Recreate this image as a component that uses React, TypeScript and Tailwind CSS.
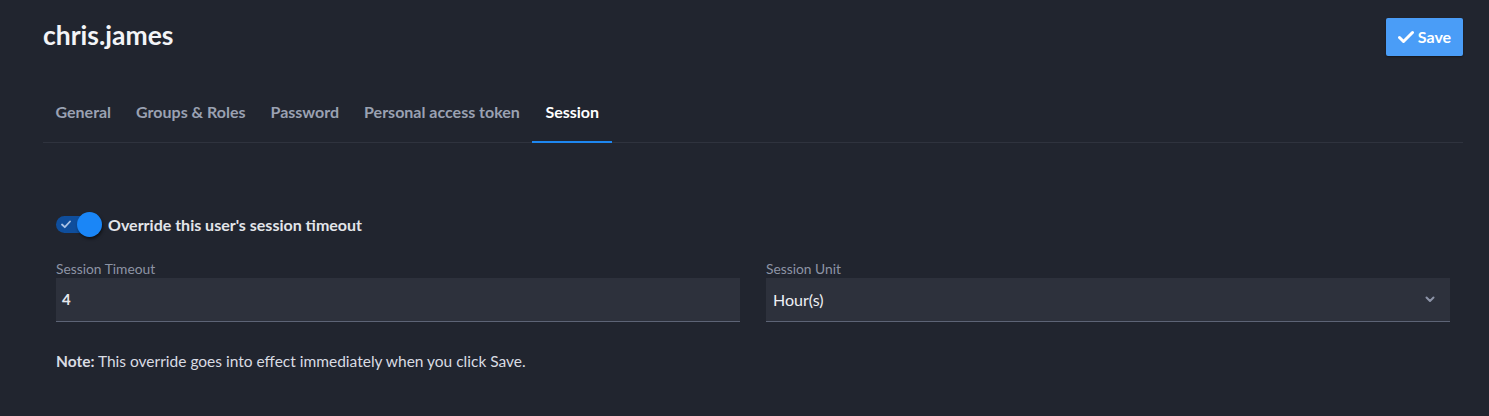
import React from "react";

const tabs = ["General", "Groups & Roles", "Password", "Personal access token", "Session"];

export default function App() {
  return (
    <div className="min-h-[416px] w-full bg-[#21252f] pl-[43px] pr-[26px] pt-[18px] text-[#e6e8ee]" style={{ fontFamily: "Lato, 'Noto Sans', sans-serif" }}>
      <div className="flex items-center justify-between h-[38px]">
        <h1 className="-mt-[4px] text-[26.5px] font-bold text-[#f3f4f7] leading-none">chris.james</h1>
        <button className="flex h-[38px] w-[77px] items-center justify-center gap-[4px] rounded-[2px] bg-[#4a9df7] text-[16px] font-bold text-white shadow-[0_1px_2px_rgba(0,0,0,0.4)]">
          <svg width="16" height="14" viewBox="0 0 16 14" fill="none">
            <path d="M1.5 7.5 L5.5 11.5 L14.5 2.5" stroke="white" strokeWidth="3" strokeLinecap="round" strokeLinejoin="round" />
          </svg>
          Save
        </button>
      </div>

      <div className="mt-[40px] flex border-b border-[#2f333e]">
        {tabs.map((t) => {
          const active = t === "Session";
          return (
            <div
              key={t}
              className={
                active
                  ? "-mb-px border-b-2 border-[#1e87f0] px-[13px] pb-[17px] pt-[4px] text-[16px] leading-[24px] font-bold text-white"
                  : "px-[12.5px] pb-[18px] pt-[4px] text-[16px] leading-[24px] font-bold text-[#9aa1b2]"
              }
            >
              {t}
            </div>
          );
        })}
      </div>

      <div className="px-[13px] pt-[69px]">
        <div className="flex items-center gap-[6px]">
          <div className="relative h-[25px] w-[46px]">
            <div className="absolute left-0 top-[4px] h-[17px] w-[36px] rounded-full bg-[#0f4e9c]">
              <svg className="absolute left-[5px] top-[4px]" width="10" height="9" viewBox="0 0 10 9" fill="none">
                <path d="M1 4.5 L3.8 7.2 L9 1.5" stroke="#a9c3e6" strokeWidth="1.8" strokeLinecap="round" strokeLinejoin="round" />
              </svg>
            </div>
            <div className="absolute right-0 top-0 h-[25px] w-[25px] rounded-full bg-[#1a86f7] shadow-[1px_2px_3px_rgba(0,0,0,0.5)]" />
          </div>
          <span className="text-[16px] font-bold text-[#e3e5ea]">Override this user's session timeout</span>
        </div>

        <div className="mt-[24px] grid grid-cols-2 gap-[26px]">
          <div>
            <div className="text-[13.8px] text-[#8d94a5] leading-[16px]">Session Timeout</div>
            <div className="mt-[1px] flex h-[44px] items-center border-b border-[#5d6476] bg-[#2d313c] px-[6px] text-[15px] font-bold text-[#e6e8ee]">4</div>
          </div>
          <div>
            <div className="text-[13.8px] text-[#8d94a5] leading-[16px]">Session Unit</div>
            <div className="mt-[1px] flex h-[44px] items-center justify-between border-b border-[#5d6476] bg-[#2d313c] pl-[7px] pr-[15px] text-[16px] text-[#eef0f4]">
              <span>Hour(s)</span>
              <svg width="10" height="7" viewBox="0 0 10 7" fill="none">
                <path d="M1.5 1.5 L5 5 L8.5 1.5" stroke="#8d94a8" strokeWidth="2" strokeLinecap="round" strokeLinejoin="round" />
              </svg>
            </div>
          </div>
        </div>

        <p className="mt-[28px] text-[15.5px] leading-[23px] text-[#d9dce3]">
          <span className="font-bold">Note:</span> This override goes into effect immediately when you click Save.
        </p>
      </div>
    </div>
  );
}
